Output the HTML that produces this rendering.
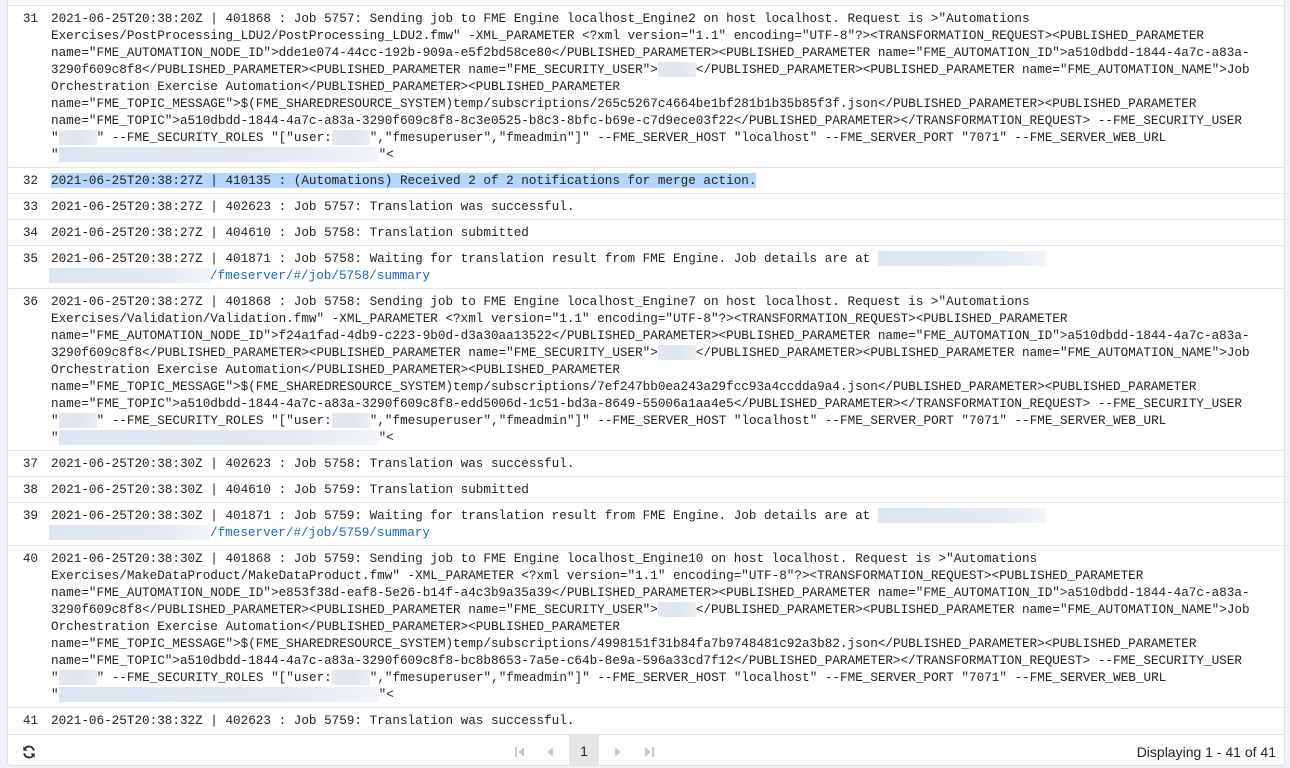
<!DOCTYPE html>
<html><head><meta charset="utf-8"><style>
*{margin:0;padding:0;box-sizing:border-box}
body{width:1290px;height:768px;overflow:hidden;background:#eef2f8;font-family:"Liberation Mono",monospace;}
.panel{position:absolute;left:7px;top:-1px;width:1278px;height:767px;background:#fff;border:1px solid #dde1e6;border-radius:0 0 4px 4px;overflow:hidden}
.row{position:relative;border-top:1px solid #e3e5e8;padding:4px 0 4px 0;font-size:12.65px;line-height:17px;color:#222;white-space:pre}
.n{position:absolute;left:0;width:30px;text-align:right}
.t{margin-left:43px}
.b,.bb{display:inline-block;height:15px;vertical-align:top;margin-top:1px}
.b{background:linear-gradient(90deg,#e4e8ee,#dfe5ee 50%,#eaeef4)}
.bb{background:linear-gradient(90deg,#dde5f2,#e2e9f4 70%,#f2f5f9)}
.sel{background:#b4d5fe}
.lk{color:#1a66c7}
.foot{position:absolute;left:0;right:0;bottom:0;height:31px;border-top:1px solid #dde1e6;background:#fff;font-family:"Liberation Sans",sans-serif;font-size:14px;color:#222}
.pg{position:absolute;top:12px;height:10px;fill:#c8cacd}
</style></head><body><div class="panel">
<div style="height:5px"></div>
<div class="row"><span class="n">31</span><div class="t">2021-06-25T20:38:20Z | 401868 : Job 5757: Sending job to FME Engine localhost_Engine2 on host localhost. Request is >"Automations
Exercises/PostProcessing_LDU2/PostProcessing_LDU2.fmw" -XML_PARAMETER &lt;?xml version="1.1" encoding="UTF-8"?>&lt;TRANSFORMATION_REQUEST>&lt;PUBLISHED_PARAMETER
name="FME_AUTOMATION_NODE_ID">dde1e074-44cc-192b-909a-e5f2bd58ce80&lt;/PUBLISHED_PARAMETER>&lt;PUBLISHED_PARAMETER name="FME_AUTOMATION_ID">a510dbdd-1844-4a7c-a83a-
3290f609c8f8&lt;/PUBLISHED_PARAMETER>&lt;PUBLISHED_PARAMETER name="FME_SECURITY_USER"><span class="b" style="width:38px"></span>&lt;/PUBLISHED_PARAMETER>&lt;PUBLISHED_PARAMETER name="FME_AUTOMATION_NAME">Job
Orchestration Exercise Automation&lt;/PUBLISHED_PARAMETER>&lt;PUBLISHED_PARAMETER
name="FME_TOPIC_MESSAGE">$(FME_SHAREDRESOURCE_SYSTEM)temp/subscriptions/265c5267c4664be1bf281b1b35b85f3f.json&lt;/PUBLISHED_PARAMETER>&lt;PUBLISHED_PARAMETER
name="FME_TOPIC">a510dbdd-1844-4a7c-a83a-3290f609c8f8-8c3e0525-b8c3-8bfc-b69e-c7d9ece03f22&lt;/PUBLISHED_PARAMETER>&lt;/TRANSFORMATION_REQUEST> --FME_SECURITY_USER
"<span class="b" style="width:38px"></span>" --FME_SECURITY_ROLES "["user:<span class="b" style="width:38px"></span>","fmesuperuser","fmeadmin"]" --FME_SERVER_HOST "localhost" --FME_SERVER_PORT "7071" --FME_SERVER_WEB_URL
"<span class="bb" style="width:320px"></span>"&lt;</div></div>
<div class="row"><span class="n">32</span><div class="t"><span class="sel">2021-06-25T20:38:27Z | 410135 : (Automations) Received 2 of 2 notifications for merge action.</span></div></div>
<div class="row"><span class="n">33</span><div class="t">2021-06-25T20:38:27Z | 402623 : Job 5757: Translation was successful.</div></div>
<div class="row"><span class="n">34</span><div class="t">2021-06-25T20:38:27Z | 404610 : Job 5758: Translation submitted</div></div>
<div class="row"><span class="n">35</span><div class="t">2021-06-25T20:38:27Z | 401871 : Job 5758: Waiting for translation result from FME Engine. Job details are at <span class="bb" style="width:168px"></span>
<span class="bb" style="width:161px;margin-left:-2px"></span><span class="lk">/fmeserver/#/job/5758/summary</span></div></div>
<div class="row"><span class="n">36</span><div class="t">2021-06-25T20:38:27Z | 401868 : Job 5758: Sending job to FME Engine localhost_Engine7 on host localhost. Request is >"Automations
Exercises/Validation/Validation.fmw" -XML_PARAMETER &lt;?xml version="1.1" encoding="UTF-8"?>&lt;TRANSFORMATION_REQUEST>&lt;PUBLISHED_PARAMETER
name="FME_AUTOMATION_NODE_ID">f24a1fad-4db9-c223-9b0d-d3a30aa13522&lt;/PUBLISHED_PARAMETER>&lt;PUBLISHED_PARAMETER name="FME_AUTOMATION_ID">a510dbdd-1844-4a7c-a83a-
3290f609c8f8&lt;/PUBLISHED_PARAMETER>&lt;PUBLISHED_PARAMETER name="FME_SECURITY_USER"><span class="b" style="width:38px"></span>&lt;/PUBLISHED_PARAMETER>&lt;PUBLISHED_PARAMETER name="FME_AUTOMATION_NAME">Job
Orchestration Exercise Automation&lt;/PUBLISHED_PARAMETER>&lt;PUBLISHED_PARAMETER
name="FME_TOPIC_MESSAGE">$(FME_SHAREDRESOURCE_SYSTEM)temp/subscriptions/7ef247bb0ea243a29fcc93a4ccdda9a4.json&lt;/PUBLISHED_PARAMETER>&lt;PUBLISHED_PARAMETER
name="FME_TOPIC">a510dbdd-1844-4a7c-a83a-3290f609c8f8-edd5006d-1c51-bd3a-8649-55006a1aa4e5&lt;/PUBLISHED_PARAMETER>&lt;/TRANSFORMATION_REQUEST> --FME_SECURITY_USER
"<span class="b" style="width:38px"></span>" --FME_SECURITY_ROLES "["user:<span class="b" style="width:38px"></span>","fmesuperuser","fmeadmin"]" --FME_SERVER_HOST "localhost" --FME_SERVER_PORT "7071" --FME_SERVER_WEB_URL
"<span class="bb" style="width:320px"></span>"&lt;</div></div>
<div class="row"><span class="n">37</span><div class="t">2021-06-25T20:38:30Z | 402623 : Job 5758: Translation was successful.</div></div>
<div class="row"><span class="n">38</span><div class="t">2021-06-25T20:38:30Z | 404610 : Job 5759: Translation submitted</div></div>
<div class="row"><span class="n">39</span><div class="t">2021-06-25T20:38:30Z | 401871 : Job 5759: Waiting for translation result from FME Engine. Job details are at <span class="bb" style="width:168px"></span>
<span class="bb" style="width:161px;margin-left:-2px"></span><span class="lk">/fmeserver/#/job/5759/summary</span></div></div>
<div class="row"><span class="n">40</span><div class="t">2021-06-25T20:38:30Z | 401868 : Job 5759: Sending job to FME Engine localhost_Engine10 on host localhost. Request is >"Automations
Exercises/MakeDataProduct/MakeDataProduct.fmw" -XML_PARAMETER &lt;?xml version="1.1" encoding="UTF-8"?>&lt;TRANSFORMATION_REQUEST>&lt;PUBLISHED_PARAMETER
name="FME_AUTOMATION_NODE_ID">e853f38d-eaf8-5e26-b14f-a4c3b9a35a39&lt;/PUBLISHED_PARAMETER>&lt;PUBLISHED_PARAMETER name="FME_AUTOMATION_ID">a510dbdd-1844-4a7c-a83a-
3290f609c8f8&lt;/PUBLISHED_PARAMETER>&lt;PUBLISHED_PARAMETER name="FME_SECURITY_USER"><span class="b" style="width:38px"></span>&lt;/PUBLISHED_PARAMETER>&lt;PUBLISHED_PARAMETER name="FME_AUTOMATION_NAME">Job
Orchestration Exercise Automation&lt;/PUBLISHED_PARAMETER>&lt;PUBLISHED_PARAMETER
name="FME_TOPIC_MESSAGE">$(FME_SHAREDRESOURCE_SYSTEM)temp/subscriptions/4998151f31b84fa7b9748481c92a3b82.json&lt;/PUBLISHED_PARAMETER>&lt;PUBLISHED_PARAMETER
name="FME_TOPIC">a510dbdd-1844-4a7c-a83a-3290f609c8f8-bc8b8653-7a5e-c64b-8e9a-596a33cd7f12&lt;/PUBLISHED_PARAMETER>&lt;/TRANSFORMATION_REQUEST> --FME_SECURITY_USER
"<span class="b" style="width:38px"></span>" --FME_SECURITY_ROLES "["user:<span class="b" style="width:38px"></span>","fmesuperuser","fmeadmin"]" --FME_SERVER_HOST "localhost" --FME_SERVER_PORT "7071" --FME_SERVER_WEB_URL
"<span class="bb" style="width:320px"></span>"&lt;</div></div>
<div class="row"><span class="n">41</span><div class="t">2021-06-25T20:38:32Z | 402623 : Job 5759: Translation was successful.</div></div>
<div class="foot">
<svg style="position:absolute;left:14px;top:10px" width="14" height="14" viewBox="0 0 16 16"><path d="M13.5 6.5A5.7 5.7 0 0 0 3 4.5M2.5 9.5A5.7 5.7 0 0 0 13 11.5" fill="none" stroke="#333" stroke-width="2.2"/><path d="M1.5 1.5v5h5z M14.5 14.5v-5h-5z" fill="#333"/></svg>
<svg class="pg" style="left:507px" width="9" viewBox="0 0 9 10"><rect x="0" y="0" width="2" height="10"/><path d="M9 0v10L3 5z"/></svg>
<svg class="pg" style="left:539px" width="6" viewBox="0 0 6 10"><path d="M6 0v10L0 5z"/></svg>
<div style="position:absolute;left:561px;top:0;width:30px;height:31px;background:#e6e6e6;text-align:center;line-height:33px">1</div>
<svg class="pg" style="left:607px" width="6" viewBox="0 0 6 10"><path d="M0 0v10L6 5z"/></svg>
<svg class="pg" style="left:637px" width="9" viewBox="0 0 9 10"><path d="M0 0v10L6 5z"/><rect x="7" y="0" width="2" height="10"/></svg>
<span style="position:absolute;right:8px;top:9px">Displaying 1 - 41 of 41</span>
</div>
</div></body></html>
